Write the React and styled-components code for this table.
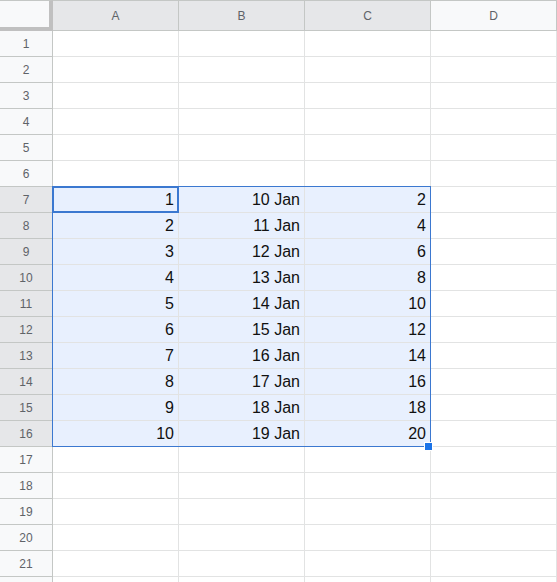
import styled, { createGlobalStyle } from 'styled-components'

const GlobalStyle = createGlobalStyle`
  html, body {
    margin: 0;
    padding: 0;
    background: #ffffff;
    overflow: hidden;
  }
`

const COLS = ['A', 'B', 'C', 'D']
const ROW_COUNT = 21

const data = {
  7: ['1', '10 Jan', '2'],
  8: ['2', '11 Jan', '4'],
  9: ['3', '12 Jan', '6'],
  10: ['4', '13 Jan', '8'],
  11: ['5', '14 Jan', '10'],
  12: ['6', '15 Jan', '12'],
  13: ['7', '16 Jan', '14'],
  14: ['8', '17 Jan', '16'],
  15: ['9', '18 Jan', '18'],
  16: ['10', '19 Jan', '20'],
}

const Sheet = styled.div`
  position: relative;
  width: 557px;
  height: 582px;
  overflow: hidden;
  font-family: 'Liberation Sans', Arial, sans-serif;
`

const Grid = styled.div`
  display: grid;
  grid-template-columns: 53px repeat(4, 126px);
  grid-template-rows: 31px repeat(${ROW_COUNT}, 26px) 26px;
`

const Corner = styled.div`
  box-sizing: border-box;
  background: #f8f9fa;
  border-top: 1px solid #c4c7c5;
  border-right: 4px solid #c0c0c0;
  border-bottom: 4px solid #c0c0c0;
`

const ColHeader = styled.div`
  box-sizing: border-box;
  display: flex;
  align-items: center;
  justify-content: center;
  background: ${p => (p.$active ? '#e6e7e9' : '#f8f9fa')};
  border-top: 1px solid #c4c7c5;
  border-right: 1px solid #c4c7c5;
  border-bottom: 1px solid #c4c7c5;
  color: #5f6368;
  font-size: 12px;
`

const RowHeader = styled.div`
  box-sizing: border-box;
  display: flex;
  align-items: center;
  justify-content: center;
  background: ${p => (p.$active ? '#e6e7e9' : '#f8f9fa')};
  border-right: 1px solid #c4c7c5;
  border-bottom: 1px solid #c4c7c5;
  color: #5f6368;
  font-size: 12px;
`

const Cell = styled.div`
  box-sizing: border-box;
  display: flex;
  align-items: center;
  justify-content: flex-end;
  padding: 1px 4px 0 3px;
  background: ${p => (p.$selected ? '#e8f0fe' : '#ffffff')};
  border-right: 1px solid #e2e3e3;
  border-bottom: 1px solid #e2e3e3;
  color: #111111;
  font-size: 16px;
  white-space: nowrap;
`

const Selection = styled.div`
  position: absolute;
  left: 52px;
  top: 186px;
  width: 379px;
  height: 261px;
  box-sizing: border-box;
  border: 1px solid #3b78d0;
  pointer-events: none;
`

const ActiveCell = styled.div`
  position: absolute;
  left: 52px;
  top: 186px;
  width: 127px;
  height: 27px;
  box-sizing: border-box;
  border: 2px solid #3b78d0;
  pointer-events: none;
`

const FillHandle = styled.div`
  position: absolute;
  left: 424px;
  top: 442px;
  width: 7px;
  height: 7px;
  background: #1a73e8;
  border: 1px solid #ffffff;
`

const isSelected = (row, col) => row >= 7 && row <= 16 && col < 3

const Row = ({ row }) => {
  const values = data[row] || []
  return (
    <>
      <RowHeader $active={row >= 7 && row <= 16}>{row}</RowHeader>
      {COLS.map((c, i) => (
        <Cell key={c} $selected={isSelected(row, i)}>{values[i] || ''}</Cell>
      ))}
    </>
  )
}

export default function App() {
  const rows = Array.from({ length: ROW_COUNT }, (_, i) => i + 1)

  return (
    <>
      <GlobalStyle />
      <Sheet>
        <Grid>
          <Corner />
          {COLS.map((c, i) => (
            <ColHeader key={c} $active={i < 3}>{c}</ColHeader>
          ))}
          {rows.map(r => (
            <Row key={r} row={r} />
          ))}
          <RowHeader />
          {COLS.map(c => (
            <Cell key={c} />
          ))}
        </Grid>
        <Selection />
        <ActiveCell />
        <FillHandle />
      </Sheet>
    </>
  )
}
